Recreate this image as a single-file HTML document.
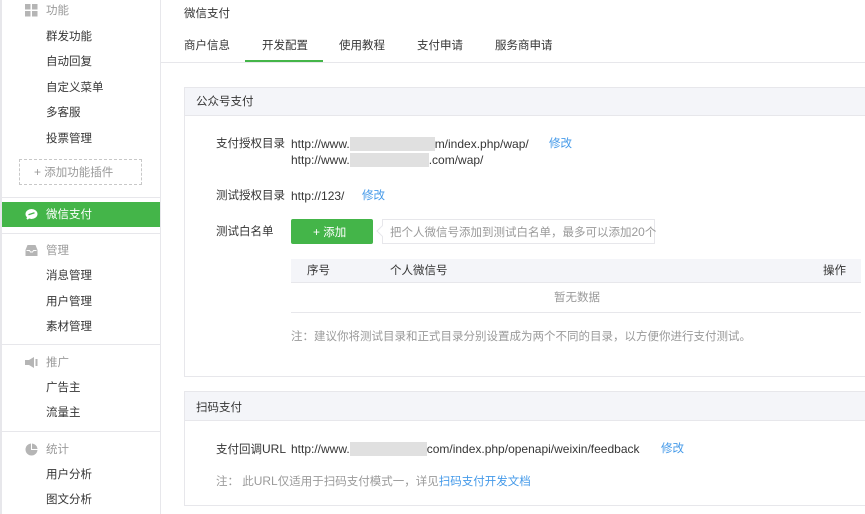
<!DOCTYPE html>
<html><head><meta charset="utf-8"><style>
*{margin:0;padding:0;box-sizing:border-box}
body{width:865px;height:514px;overflow:hidden;background:#fff;font-family:"Liberation Sans","Noto Sans CJK SC",sans-serif;font-size:11.5px;color:#353535;position:relative}
.a{position:absolute;white-space:nowrap;line-height:14px}
.u{font-size:12px}
.g{color:#9a9a9a}
.l{color:#459ae9}
.hr{position:absolute;height:1px;background:#e7e7eb}
.ic{position:absolute;left:25px;width:13px;height:13px}
</style></head><body>
<div style="position:absolute;left:0;top:0;width:2px;height:514px;background:#e7e7eb"></div>
<div style="position:absolute;left:160px;top:0;width:1px;height:514px;background:#e7e7eb"></div>

<svg class="ic" style="top:4px" viewBox="0 0 13 13"><g fill="#b5b5b5"><rect x="0" y="0" width="5.5" height="5.5"/><rect x="7" y="0" width="5.5" height="5.5"/><rect x="0" y="7" width="5.5" height="5.5"/><rect x="7" y="7" width="5.5" height="5.5"/></g></svg>
<div class="a g" style="left:46px;top:4px">功能</div>
<div class="a" style="left:46px;top:30px">群发功能</div>
<div class="a" style="left:46px;top:55px">自动回复</div>
<div class="a" style="left:46px;top:81px">自定义菜单</div>
<div class="a" style="left:46px;top:106px">多客服</div>
<div class="a" style="left:46px;top:132px">投票管理</div>
<div style="position:absolute;left:19px;top:159px;width:123px;height:26px;border:1px dashed #c8c8c8"></div>
<div class="a g" style="left:34px;top:165px"><span class="u">+</span> 添加功能插件</div>
<div class="hr" style="left:2px;top:197px;width:158px"></div>
<div style="position:absolute;left:2px;top:202px;width:158px;height:25px;background:#44b549"></div>
<svg class="ic" style="top:208px" viewBox="0 0 13 13"><ellipse cx="6.5" cy="6" rx="6" ry="5" fill="#fff"/><path d="M2 11l2-2" stroke="#fff" stroke-width="2"/><path d="M3.5 6.8q3 -1 6-2" stroke="#44b549" stroke-width="1.3" fill="none"/></svg>
<div class="a" style="left:46px;top:208px;color:#fff">微信支付</div>
<div class="hr" style="left:2px;top:233px;width:158px"></div>
<svg class="ic" style="top:244px" viewBox="0 0 13 13"><path d="M0.5 6l2-5h8l2 5v6h-12z" fill="#b5b5b5"/><path d="M1.5 6.5h3l1 1.5h2l1-1.5h3" stroke="#fff" fill="none"/></svg>
<div class="a g" style="left:46px;top:244px">管理</div>
<div class="a" style="left:46px;top:269px">消息管理</div>
<div class="a" style="left:46px;top:295px">用户管理</div>
<div class="a" style="left:46px;top:320px">素材管理</div>
<div class="hr" style="left:2px;top:344px;width:158px"></div>
<svg class="ic" style="top:356px" viewBox="0 0 13 13"><path d="M0 4h4l5-3v11l-5-3h-4z" fill="#b5b5b5"/><rect x="10.5" y="3" width="2" height="7" fill="#b5b5b5"/></svg>
<div class="a g" style="left:46px;top:356px">推广</div>
<div class="a" style="left:46px;top:381px">广告主</div>
<div class="a" style="left:46px;top:406px">流量主</div>
<div class="hr" style="left:2px;top:431px;width:158px"></div>
<svg class="ic" style="top:443px" viewBox="0 0 13 13"><circle cx="6.5" cy="6.5" r="6" fill="#b5b5b5"/><path d="M6.5 0.5v6h6" stroke="#fff" fill="none"/></svg>
<div class="a g" style="left:46px;top:443px">统计</div>
<div class="a" style="left:46px;top:468px">用户分析</div>
<div class="a" style="left:46px;top:493px">图文分析</div>

<div class="a" style="left:184px;top:7px">微信支付</div>
<div class="a" style="left:184px;top:39px">商户信息</div>
<div class="a" style="left:262px;top:39px">开发配置</div>
<div class="a" style="left:339px;top:39px">使用教程</div>
<div class="a" style="left:417px;top:39px">支付申请</div>
<div class="a" style="left:495px;top:39px">服务商申请</div>
<div class="hr" style="left:161px;top:62px;width:704px"></div>
<div style="position:absolute;left:245px;top:60px;width:78px;height:2px;background:#44b549"></div>

<div style="position:absolute;left:184px;top:87px;width:690px;height:290px;border:1px solid #e7e7eb"></div>
<div style="position:absolute;left:185px;top:88px;width:690px;height:28px;background:#f4f5f9;border-bottom:1px solid #e7e7eb"></div>
<div class="a" style="left:196px;top:95px">公众号支付</div>
<div class="a" style="left:216px;top:137px">支付授权目录</div>
<div class="a u" style="left:291px;top:137px">http://www.<span style="display:inline-block;width:85px;height:14px;background:#e0e0e0;vertical-align:top"></span>m/index.php/wap/</div>
<div class="a l" style="left:549px;top:137px">修改</div>
<div class="a u" style="left:291px;top:153px">http://www.<span style="display:inline-block;width:79px;height:14px;background:#e0e0e0;vertical-align:top"></span>.com/wap/</div>
<div class="a" style="left:216px;top:189px">测试授权目录</div>
<div class="a u" style="left:291px;top:189px">http://123/</div>
<div class="a l" style="left:362px;top:189px">修改</div>
<div class="a" style="left:216px;top:225px">测试白名单</div>
<div style="position:absolute;left:291px;top:219px;width:82px;height:25px;background:#44b549;border-radius:2px"></div>
<div class="a" style="left:313px;top:225px;color:#fff"><span class="u">+</span> 添加</div>
<div style="position:absolute;left:382px;top:219px;width:273px;height:25px;border:1px solid #e7e7eb;background:#fff"></div>
<div style="position:absolute;left:378px;top:227px;width:8px;height:8px;border-left:1px solid #e7e7eb;border-bottom:1px solid #e7e7eb;background:#fff;transform:rotate(45deg)"></div>
<div class="a g" style="left:390px;top:225px">把个人微信号添加到测试白名单，最多可以添加<span class="u">20</span>个</div>
<div style="position:absolute;left:291px;top:259px;width:570px;height:24px;background:#f4f5f9;border-bottom:1px solid #e7e7eb"></div>
<div class="a" style="left:307px;top:264px">序号</div>
<div class="a" style="left:390px;top:264px">个人微信号</div>
<div class="a" style="left:823px;top:264px">操作</div>
<div class="a g" style="left:554px;top:291px">暂无数据</div>
<div class="hr" style="left:291px;top:312px;width:570px"></div>
<div class="a g" style="left:291px;top:330px">注：建议你将测试目录和正式目录分别设置成为两个不同的目录，以方便你进行支付测试。</div>

<div style="position:absolute;left:184px;top:391px;width:690px;height:115px;border:1px solid #e7e7eb"></div>
<div style="position:absolute;left:185px;top:392px;width:690px;height:29px;background:#f4f5f9;border-bottom:1px solid #e7e7eb"></div>
<div class="a" style="left:196px;top:401px">扫码支付</div>
<div class="a" style="left:216px;top:442px">支付回调<span class="u">URL</span></div>
<div class="a u" style="left:291px;top:442px">http://www.<span style="display:inline-block;width:77px;height:14px;background:#e0e0e0;vertical-align:top"></span>com/index.php/openapi/weixin/feedback</div>
<div class="a l" style="left:661px;top:442px">修改</div>
<div class="a g" style="left:216px;top:474px">注： 此<span class="u">URL</span>仅适用于扫码支付模式一，详见<span class="l">扫码支付开发文档</span></div>
</body></html>
